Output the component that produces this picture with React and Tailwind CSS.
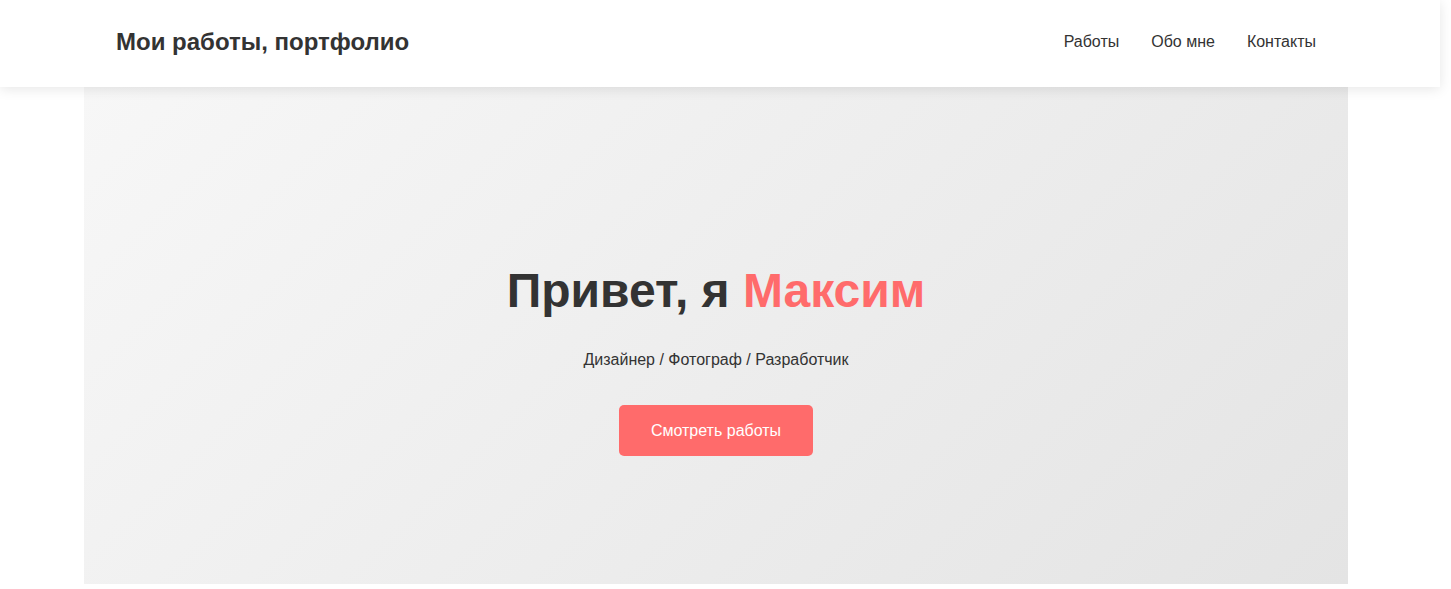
import React from 'react'

const links = ['Работы', 'Обо мне', 'Контакты']

const Header = () => (
  <header className="relative z-10 w-[1440px] h-[87px] bg-white shadow-[0_2px_12px_rgba(0,0,0,0.1)]">
    <div className="w-[1432px] h-full">
      <div className="w-[1200px] h-full mx-auto pb-[4px] flex items-center justify-between">
        <h2 className="text-[24px] font-bold text-[#333] leading-none">Мои работы, портфолио</h2>
        <nav className="flex items-center gap-8">
          {links.map(link => (
            <a key={link} href="#" className="text-[16px] text-[#333] leading-none">
              {link}
            </a>
          ))}
        </nav>
      </div>
    </div>
  </header>
)

const Hero = () => (
  <div className="w-[1432px]">
    <section className="w-[1264px] h-[497px] mx-auto bg-[linear-gradient(135deg,#f7f7f7_0%,#e4e4e4_100%)] flex flex-col items-center pt-[177px]">
      <h1 className="text-[48px] font-bold text-[#333] leading-[54px]">
        Привет, я <span className="text-[#ff6b6b]">Максим</span>
      </h1>
      <p className="mt-[33px] text-[16px] text-[#333] leading-[18px]">
        Дизайнер / Фотограф / Разработчик
      </p>
      <button className="mt-[36px] h-[51px] px-8 rounded-[5px] bg-[#ff6b6b] text-white text-[16px] leading-none cursor-pointer">
        Смотреть работы
      </button>
    </section>
  </div>
)

export default function App() {
  return (
    <div className="min-h-screen bg-white font-['Liberation_Sans',Arial,sans-serif]">
      <Header />
      <Hero />
    </div>
  )
}
